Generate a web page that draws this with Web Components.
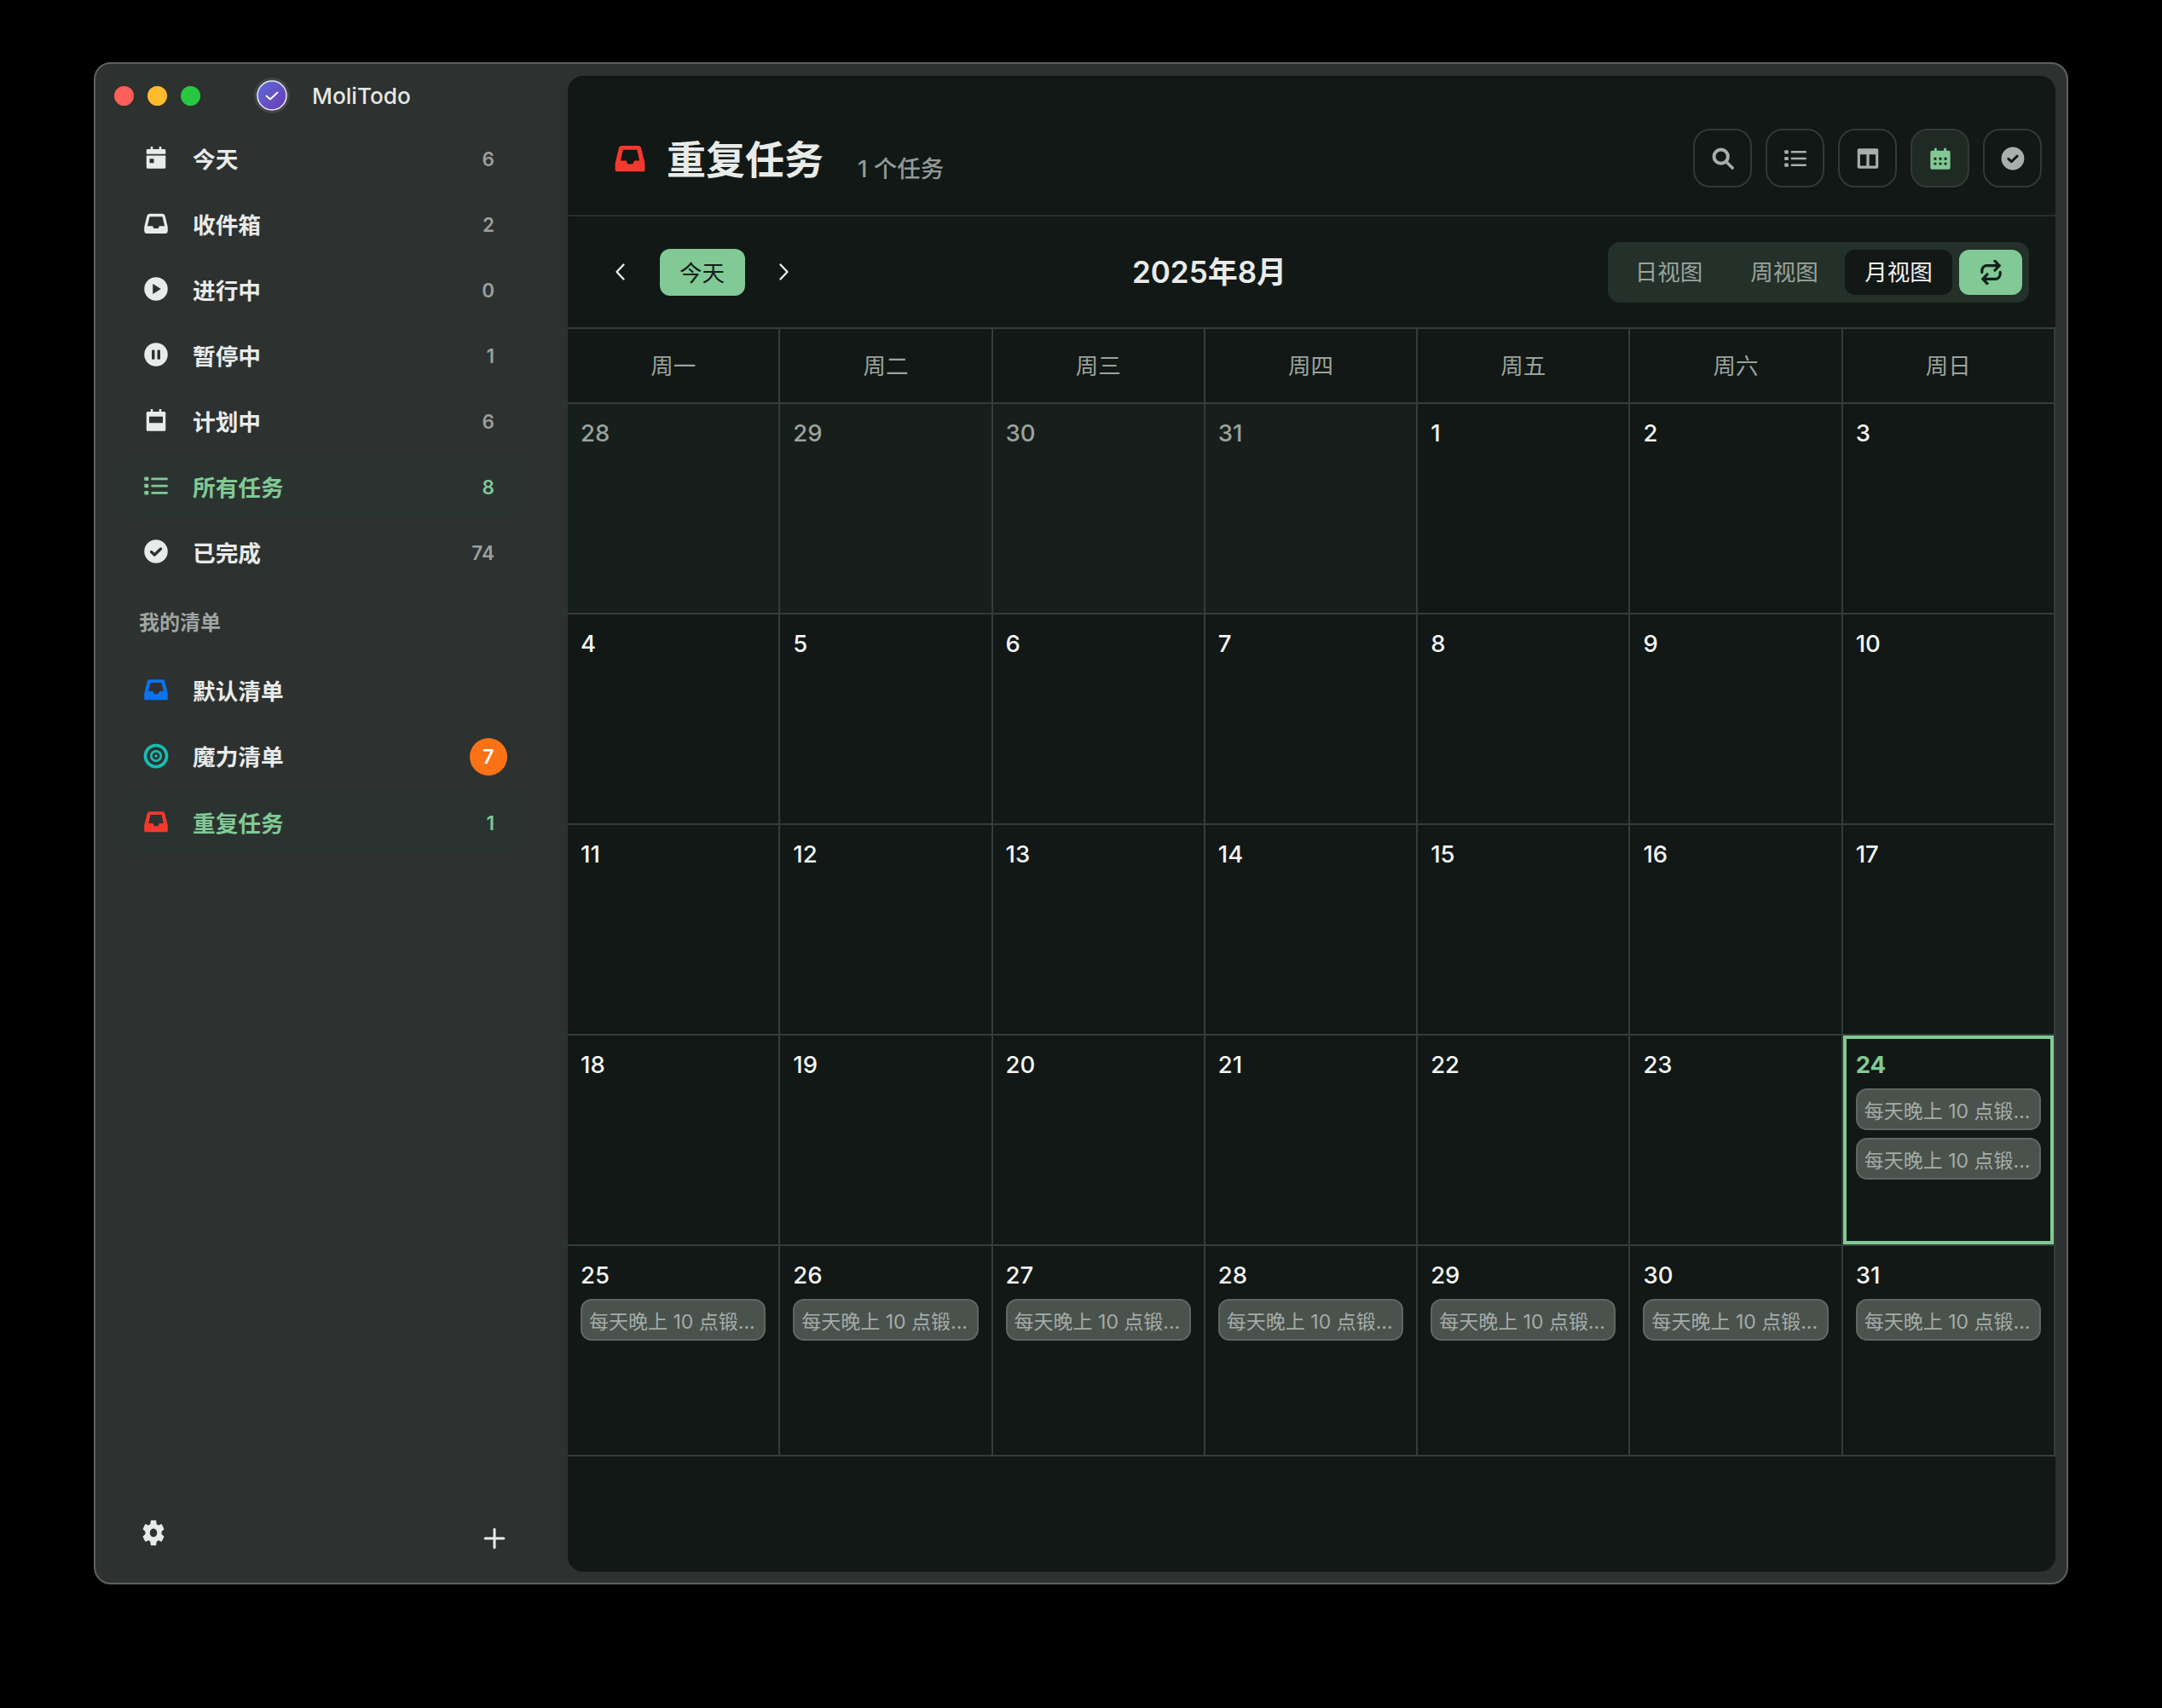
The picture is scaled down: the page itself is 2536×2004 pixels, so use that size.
<!DOCTYPE html>
<html lang="zh">
<head>
<meta charset="utf-8">
<title>MoliTodo</title>
<style>
  html, body { margin: 0; background: #000; }
  body {
    width: 2536px; height: 2004px; box-sizing: border-box; padding: 73px 110px 0;
    font-family: Inter, "Noto Sans CJK SC", sans-serif; color: #e8ebe9;
  }
</style>
</head>
<body>
<app-window>
  <side-bar slot="side">
    <nav-item icon="today" count="6">今天</nav-item>
    <nav-item icon="tray" count="2">收件箱</nav-item>
    <nav-item icon="play" count="0">进行中</nav-item>
    <nav-item icon="pause" count="1">暂停中</nav-item>
    <nav-item icon="planned" count="6">计划中</nav-item>
    <nav-item icon="list" count="8" active>所有任务</nav-item>
    <nav-item icon="done" count="74">已完成</nav-item>
    <span slot="lists-title">我的清单</span>
    <nav-item slot="lists" icon="inbox" tint="#0a72f0">默认清单</nav-item>
    <nav-item slot="lists" icon="target" tint="#14bdb0" badge="7">魔力清单</nav-item>
    <nav-item slot="lists" icon="inbox" tint="#f5392e" count="1" active>重复任务</nav-item>
  </side-bar>
  <main-panel slot="main">
    <task-header slot="header" title-text="重复任务" sub="1 个任务"></task-header>
    <cal-toolbar slot="toolbar" month="2025年8月"></cal-toolbar>
    <cal-grid slot="grid"></cal-grid>
  </main-panel>
</app-window>

<script>
// icon shapes, all on a 24 box
const ICONS = {
  today: '<path fill="currentColor" fill-rule="evenodd" d="M7 1.500h2V4h6V1.500h2V4h3a1 1 0 0 1 1 1v3.500H3V5a1 1 0 0 1 1-1h3zM3 10h18v11a1.200 1.200 0 0 1-1.200 1.200H4.200A1.200 1.200 0 0 1 3 21zm3 3v4h4v-4z"/>',
  planned: '<path fill="currentColor" fill-rule="evenodd" d="M7 1.500h2V4h6V1.500h2V4h3a1 1 0 0 1 1 1v16a1.200 1.200 0 0 1-1.200 1.200H4.200A1.200 1.200 0 0 1 3 21V5a1 1 0 0 1 1-1h3zM5.600 8.500v6h12.800v-6z"/>',
  tray: '<path fill="currentColor" fill-rule="evenodd" d="M6 3h12a2.600 2.600 0 0 1 2.500 2l2.300 9.500c.1.400.2.800.2 1.200V19a2.600 2.600 0 0 1-2.600 2.600H3.600A2.600 2.600 0 0 1 1 19v-3.300c0-.4.1-.8.2-1.200L3.500 5A2.600 2.600 0 0 1 6 3zm0 2.700-2.100 8.800h5l1 2.200h4.200l1-2.200h5L18 5.700z"/>',
  inbox: '<path fill="currentColor" fill-rule="evenodd" d="M6 2.500h12a2.400 2.400 0 0 1 2.300 1.800L23 15.500v5.200a1 1 0 0 1-1 1H2a1 1 0 0 1-1-1v-5.200L3.700 4.300A2.400 2.400 0 0 1 6 2.500zm.8 3-1.800 8h4.200l1.200 2.600h3.600l1.200-2.600H19l-1.800-8z"/>',
  play: '<circle cx="12" cy="12" r="11" fill="currentColor"/><path fill="#2d3130" d="M9 7.200v9.600l7.600-4.800z"/>',
  pause: '<circle cx="12" cy="12" r="11" fill="currentColor"/><rect x="8" y="7.500" width="2.800" height="9" rx="1" fill="#2d3130"/><rect x="13.200" y="7.500" width="2.800" height="9" rx="1" fill="#2d3130"/>',
  done: '<circle cx="12" cy="12" r="11" fill="currentColor"/><path fill="none" stroke="#2d3130" stroke-width="2.600" stroke-linecap="round" stroke-linejoin="round" d="M7.600 12.400l3 2.800 5.800-5.600"/>',
  list: '<g fill="currentColor"><rect x="1" y="3.600" width="4" height="3.600" rx=".8"/><rect x="1" y="10.200" width="4" height="3.600" rx=".8"/><rect x="1" y="16.800" width="4" height="3.600" rx=".8"/><rect x="7.500" y="4.300" width="15.500" height="2.200" rx=".6"/><rect x="7.500" y="10.900" width="15.500" height="2.200" rx=".6"/><rect x="7.500" y="17.500" width="15.500" height="2.200" rx=".6"/></g>',
  target: '<g fill="none" stroke="currentColor"><circle cx="12" cy="12" r="10" stroke-width="3"/><circle cx="12" cy="12" r="4.600" stroke-width="2.200"/></g><circle cx="12" cy="12" r="1.400" fill="currentColor"/>',
  gear: '<path fill="currentColor" d="M19.140 12.940c.04-.3.06-.61.06-.94 0-.32-.02-.64-.07-.94l2.030-1.580c.18-.14.23-.41.12-.61l-1.920-3.320c-.12-.22-.37-.29-.59-.22l-2.390.96c-.5-.38-1.030-.7-1.620-.94l-.36-2.540c-.04-.24-.24-.41-.48-.41h-3.840c-.24 0-.43.17-.47.41l-.36 2.540c-.59.24-1.130.57-1.620.94l-2.390-.96c-.22-.08-.47 0-.59.22L2.740 8.870c-.12.21-.08.47.12.61l2.030 1.580c-.05.3-.09.63-.09.94s.02.64.07.94l-2.030 1.580c-.18.14-.23.41-.12.61l1.920 3.320c.12.22.37.29.59.22l2.390-.96c.5.38 1.030.7 1.620.94l.36 2.540c.05.24.24.41.48.41h3.840c.24 0 .44-.17.47-.41l.36-2.540c.59-.24 1.130-.56 1.620-.94l2.390.96c.22.08.47 0 .59-.22l1.920-3.320c.12-.22.07-.47-.12-.61l-2.010-1.580zM12 15.200A3.200 3.200 0 1 1 12 8.800a3.200 3.200 0 0 1 0 6.400z"/>',
  plus: '<path fill="none" stroke="currentColor" stroke-width="2.800" stroke-linecap="round" d="M12 2v20M2 12h20"/>',
  search: '<g fill="none" stroke="currentColor" stroke-linecap="round"><circle cx="10" cy="10" r="7" stroke-width="3.400"/><path stroke-width="3" d="M15.500 15.500l6 6"/></g>',
  columns: '<path fill="currentColor" fill-rule="evenodd" d="M3 2h18a1.500 1.500 0 0 1 1.500 1.500v17A1.500 1.500 0 0 1 21 22H3a1.500 1.500 0 0 1-1.500-1.500v-17A1.500 1.500 0 0 1 3 2zm1.200 6v11.200h6.400V8zm9.200 0v11.200h6.400V8z"/>',
  calendar: '<path fill="currentColor" fill-rule="evenodd" d="M6 1.500h2.400V4h7.200V1.500H18V4h2.200A1.800 1.800 0 0 1 22 5.800v15.400a1.800 1.800 0 0 1-1.800 1.800H3.800A1.800 1.800 0 0 1 2 21.200V5.800A1.800 1.800 0 0 1 3.800 4H6zM5.500 11v2.400h2.600V11zm5.200 0v2.400h2.600V11zm5.200 0v2.400h2.600V11zM5.500 16v2.400h2.600V16zm5.200 0v2.400h2.600V16zm5.200 0v2.400h2.600V16z"/>',
  checked: '<circle cx="12" cy="12" r="11.500" fill="currentColor"/><path fill="none" stroke="#111815" stroke-width="2.600" stroke-linecap="round" stroke-linejoin="round" d="M7.600 12.400l3 2.800 5.800-5.600"/>',
  left: '<path fill="none" stroke="currentColor" stroke-width="2.400" stroke-linecap="round" stroke-linejoin="round" d="M15.500 3.500 7.500 12l8 8.500"/>',
  right: '<path fill="none" stroke="currentColor" stroke-width="2.400" stroke-linecap="round" stroke-linejoin="round" d="M8.500 3.500l8 8.500-8 8.500"/>',
  repeat: '<g fill="none" stroke="currentColor" stroke-width="2.800" stroke-linecap="round" stroke-linejoin="round"><path d="M16 1l4.500 4.500L16 10"/><path d="M2.500 12v-1.500a5 5 0 0 1 5-5h13"/><path d="M8 23l-4.500-4.500L8 14"/><path d="M21.500 12v1.500a5 5 0 0 1-5 5h-13"/></g>'
};

class UiIcon extends HTMLElement {
  connectedCallback() {
    if (this.shadowRoot) return;
    this.attachShadow({ mode: 'open' });
    const w = this.getAttribute('size') || 30;
    const h = this.getAttribute('height') || w;
    this.shadowRoot.innerHTML = `
      <style>
        :host { display: inline-flex; width: ${w}px; height: ${h}px; flex: none; }
        svg { width: 100%; height: 100%; display: block; }
      </style>
      <svg viewBox="0 0 24 24" preserveAspectRatio="none">${ICONS[this.getAttribute('name')] || ''}</svg>`;
  }
}
customElements.define('ui-icon', UiIcon);

class AppWindow extends HTMLElement {
  constructor() {
    super();
    this.attachShadow({ mode: 'open' });
    this.shadowRoot.innerHTML = `
      <style>
        :host {
          display: flex; box-sizing: border-box; width: 2316px; height: 1786px;
          background: #2d3130; border: 2px solid #5e605f; border-radius: 20px; overflow: hidden;
        }
        .main { flex: 1; display: flex; min-width: 0; padding: 14px 13px 13px 0; }
      </style>
      <slot name="side"></slot>
      <div class="main"><slot name="main"></slot></div>`;
  }
}
customElements.define('app-window', AppWindow);

class SideBar extends HTMLElement {
  constructor() {
    super();
    this.attachShadow({ mode: 'open' });
    this.shadowRoot.innerHTML = `
      <style>
        :host {
          display: flex; flex-direction: column; box-sizing: border-box; width: 554px; flex: none; height: 100%;
          padding: 0 52px 0 30px;
        }
        .bar { display: flex; align-items: center; height: 74px; margin-left: -8px; padding-bottom: 1px; }
        .lights { display: flex; gap: 16px; }
        .lights i { width: 23px; height: 23px; border-radius: 50%; }
        .logo { width: 42px; height: 42px; margin-left: 63px; flex: none; }
        .name { margin-left: 26px; font: 500 26.200px Inter, sans-serif; color: #e4e7e5; }
        .group { display: flex; flex-direction: column; gap: 7px; }
        .title {
          height: 30px; margin: 34px 0 28px 21px;
          font: 600 24px/30px Inter, "Noto Sans CJK SC", sans-serif; color: #9fa5a2;
        }
        .lists { gap: 7.500px; }
        .foot { margin-top: auto; height: 77px; display: flex; justify-content: space-between; padding: 0 21px 0 22px; color: #e8ebe9; }
        .foot ui-icon:last-child { margin-top: 12px; }
      </style>
      <div class="bar">
        <div class="lights">
          <i style="background:#ff5f57"></i><i style="background:#febc2e"></i><i style="background:#28c840"></i>
        </div>
        <svg class="logo" viewBox="0 0 42 42">
          <defs><linearGradient id="g" x1="0" y1="0" x2="1" y2="1"><stop offset="0" stop-color="#5b6bdc"/><stop offset="1" stop-color="#6b3cb0"/></linearGradient></defs>
          <circle cx="21" cy="21" r="21" fill="#414644"/>
          <circle cx="21" cy="21" r="17" fill="url(#g)" stroke="#e8e6f6" stroke-width="1.500"/>
          <path d="M14.500 21.500l4.500 4 8.500-8" fill="none" stroke="#fff" stroke-width="1.800" stroke-linecap="round" stroke-linejoin="round"/>
        </svg>
        <span class="name">MoliTodo</span>
      </div>
      <div class="group"><slot></slot></div>
      <div class="title"><slot name="lists-title"></slot></div>
      <div class="group lists"><slot name="lists"></slot></div>
      <div class="foot">
        <ui-icon name="gear" size="32" height="37"></ui-icon>
        <ui-icon name="plus" size="26"></ui-icon>
      </div>`;
  }
}
customElements.define('side-bar', SideBar);

class NavItem extends HTMLElement {
  connectedCallback() {
    if (this.shadowRoot) return;
    this.attachShadow({ mode: 'open' });
    const count = this.getAttribute('count');
    const badge = this.getAttribute('badge');
    const tint = this.getAttribute('tint');
    this.shadowRoot.innerHTML = `
      <style>
        :host {
          display: flex; align-items: center; box-sizing: border-box; height: 70px;
          padding: 0 34px 0 26px; border-radius: 14px; color: #e8ebe9;
          font: 600 26.700px Inter, "Noto Sans CJK SC", sans-serif;
        }
        :host([active]) { background: #2b3330; color: #81c995; }
        .icon { color: ${tint || 'currentColor'}; display: flex; }
        .label { margin-left: 28px; flex: 1; }
        .count { margin-top: 2px; font-size: 22.500px; color: #9b9f9d; }
        :host([active]) .count { color: #81c995; }
        .badge {
          width: 44px; height: 44px; border-radius: 50%; background: #f97316; color: #fff; margin: 2px -15px 0 0;
          display: flex; align-items: center; justify-content: center; font-size: 23px; font-weight: 600;
        }
      </style>
      <span class="icon"><ui-icon name="${this.getAttribute('icon')}"></ui-icon></span>
      <span class="label"><slot></slot></span>
      ${count ? `<span class="count">${count}</span>` : ''}
      ${badge ? `<span class="badge">${badge}</span>` : ''}`;
  }
}
customElements.define('nav-item', NavItem);

class MainPanel extends HTMLElement {
  constructor() {
    super();
    this.attachShadow({ mode: 'open' });
    this.shadowRoot.innerHTML = `
      <style>
        :host {
          display: flex; flex-direction: column; flex: 1; min-width: 0;
          background: #111815; border-radius: 18px; overflow: hidden;
        }
      </style>
      <slot name="header"></slot>
      <slot name="toolbar"></slot>
      <slot name="grid"></slot>`;
  }
}
customElements.define('main-panel', MainPanel);

class TaskHeader extends HTMLElement {
  connectedCallback() {
    if (this.shadowRoot) return;
    this.attachShadow({ mode: 'open' });
    const btn = (name, on) => `<span class="btn${on ? ' on' : ''}"><ui-icon name="${name}" size="28"></ui-icon></span>`;
    this.shadowRoot.innerHTML = `
      <style>
        :host {
          display: flex; align-items: center; box-sizing: border-box; height: 165px;
          padding: 30px 16px 0 54px; border-bottom: 2px solid #272e2b;
        }
        .mark { color: #f5392e; display: flex; }
        h1 { margin: 0 0 3px 24px; font: 700 46px "Inter", "Noto Sans CJK SC", sans-serif; color: #e8ebe9; }
        .sub { margin: 21px 0 0 40px; font: 500 27.500px Inter, "Noto Sans CJK SC", sans-serif; color: #929a96; flex: 1; }
        .actions { display: flex; gap: 16px; }
        .btn {
          box-sizing: border-box; width: 69px; height: 69px; border: 2px solid #333a36; border-radius: 20px;
          display: flex; align-items: center; justify-content: center; color: #a8afab;
        }
        .btn.on { background: #1f2a25; color: #81c995; }
      </style>
      <span class="mark"><ui-icon name="inbox" size="38"></ui-icon></span>
      <h1>${this.getAttribute('title-text')}</h1>
      <span class="sub">${this.getAttribute('sub')}</span>
      <div class="actions">
        ${btn('search')}${btn('list')}${btn('columns')}${btn('calendar', true)}${btn('checked')}
      </div>`;
  }
}
customElements.define('task-header', TaskHeader);

class CalToolbar extends HTMLElement {
  connectedCallback() {
    if (this.shadowRoot) return;
    this.attachShadow({ mode: 'open' });
    this.shadowRoot.innerHTML = `
      <style>
        :host {
          display: flex; align-items: center; justify-content: space-between; box-sizing: border-box; height: 130px;
          padding: 0 31px 0 50px;
        }
        .nav { display: flex; align-items: center; gap: 33.500px; padding-right: 20px; color: #e8ebe9; }
        .today {
          box-sizing: border-box; width: 100px; height: 55px; padding-bottom: 2px; border-radius: 12px; background: #81c995; color: #11201a;
          display: flex; align-items: center; justify-content: center; font: 400 26.500px "Noto Sans CJK SC", sans-serif;
        }
        .month { margin-bottom: 5px; font: 600 35px Inter, "Noto Sans CJK SC", sans-serif; color: #e8ebe9; }
        .seg {
          display: flex; align-items: center; gap: 8px; box-sizing: border-box; height: 71px; padding: 0 8px 0 10px;
          background: #24302a; border-radius: 14px; font: 400 26.500px "Noto Sans CJK SC", sans-serif; color: #9aa39e;
        }
        .seg span { display: flex; align-items: center; justify-content: center; box-sizing: border-box; width: 126px; height: 53px; padding-bottom: 3px; border-radius: 12px; }
        .seg span:first-child { padding-right: 3px; }
        .seg .on { background: #111815; color: #f0f2f1; }
        .seg .rep { width: 74px; padding-bottom: 0; background: #81c995; color: #11201a; }
      </style>
      <div class="nav">
        <ui-icon name="left" size="24"></ui-icon>
        <div class="today">今天</div>
        <ui-icon name="right" size="24"></ui-icon>
      </div>
      <div class="month">${this.getAttribute('month')}</div>
      <div class="seg">
        <span>日视图</span><span>周视图</span><span class="on">月视图</span>
        <span class="rep"><ui-icon name="repeat" size="27" height="29"></ui-icon></span>
      </div>`;
  }
}
customElements.define('cal-toolbar', CalToolbar);

class TaskChip extends HTMLElement {
  constructor() {
    super();
    this.attachShadow({ mode: 'open' });
    this.shadowRoot.innerHTML = `
      <style>
        :host {
          display: flex; align-items: center; box-sizing: border-box; height: 49px; padding: 0 8px;
          background: #4a524e; border: 2px solid #5f6763; border-radius: 13px; overflow: hidden; white-space: nowrap;
          font: 400 23px Inter, "Noto Sans CJK SC", sans-serif; color: #a4aca7;
        }
      </style>
      <slot></slot>`;
  }
}
customElements.define('task-chip', TaskChip);

class CalCell extends HTMLElement {
  connectedCallback() {
    if (this.shadowRoot) return;
    this.attachShadow({ mode: 'open' });
    this.shadowRoot.innerHTML = `
      <style>
        :host {
          display: flex; flex-direction: column; box-sizing: border-box; min-width: 0; height: 247px;
          padding: 17px 15px 0; border-right: 2px solid #343d39; border-bottom: 2px solid #343d39;
          gap: 9px;
        }
        :host([muted]) { background: #171f1c; }
        :host([muted]) .num { color: #9aa39e; }
        :host([today]) { box-shadow: inset 0 0 0 4px #81c995; }
        :host([today]) .num { color: #81c995; font-weight: 700; }
        .num { height: 34px; margin-bottom: 2px; font: 500 27.500px/34px Inter, sans-serif; color: #f2f4f3; }
      </style>
      <span class="num">${this.getAttribute('day')}</span>
      <slot></slot>`;
  }
}
customElements.define('cal-cell', CalCell);

class CalGrid extends HTMLElement {
  connectedCallback() {
    if (this.shadowRoot) return;
    this.attachShadow({ mode: 'open' });
    const chip = '<task-chip>每天晚上 10 点锻...</task-chip>';
    const heads = ['周一', '周二', '周三', '周四', '周五', '周六', '周日']
      .map(d => `<div class="head">${d}</div>`).join('');
    const days = [28, 29, 30, 31];
    for (let d = 1; d <= 31; d++) days.push(d);
    const cells = days.map((d, i) => {
      const attrs = i < 4 ? ' muted' : (d === 24 ? ' today' : '');
      const chips = i < 4 || d < 24 ? '' : (d === 24 ? chip + chip : chip);
      return `<cal-cell day="${d}"${attrs}>${chips}</cal-cell>`;
    }).join('');
    this.shadowRoot.innerHTML = `
      <style>
        :host {
          display: grid; grid-template-columns: repeat(7, 1fr); border-top: 2px solid #343d39;
        }
        .head {
          box-sizing: border-box; height: 88px; padding-bottom: 3px; display: flex; align-items: center; justify-content: center;
          border-right: 2px solid #343d39; border-bottom: 2px solid #343d39;
          font: 400 26.500px "Noto Sans CJK SC", sans-serif; color: #9aa39e;
        }
      </style>
      ${heads}${cells}`;
  }
}
customElements.define('cal-grid', CalGrid);
</script>
</body>
</html>
